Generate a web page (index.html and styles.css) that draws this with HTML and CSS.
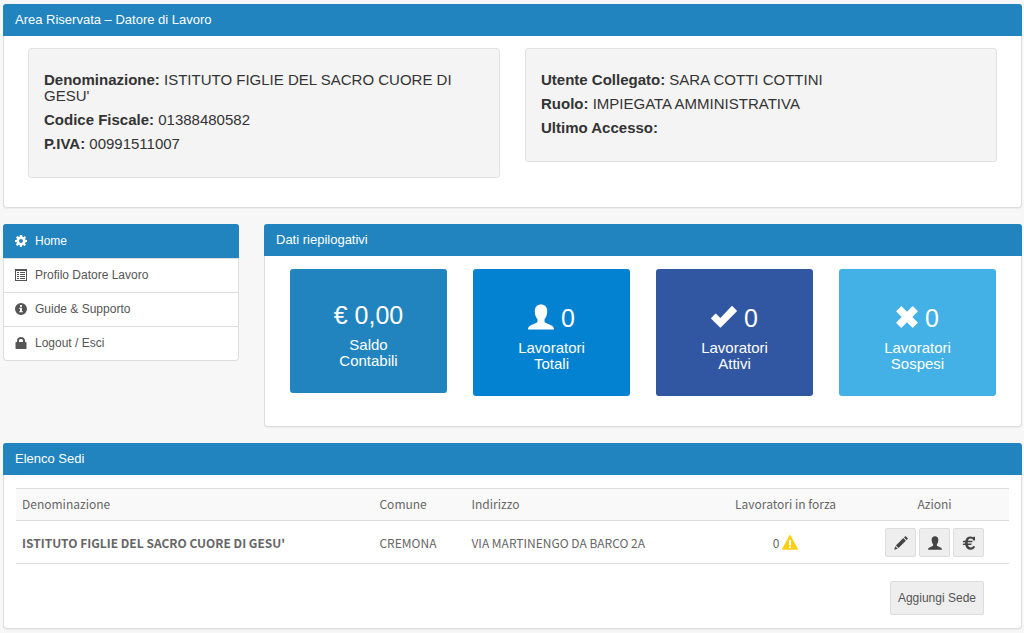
FILE: index.html
```html
<!DOCTYPE html>
<html lang="it">
<head>
<meta charset="utf-8">
<meta name="viewport" content="width=device-width, initial-scale=1">
<title>Area Riservata – Datore di Lavoro</title>
<link rel="stylesheet" href="styles.css">
</head>
<body>
<svg class="sprite" aria-hidden="true">
  <symbol id="i-user" viewBox="0 0 26 26"><path d="M13 .5c3.900 0 6.200 2.400 6.200 6.500 0 3.800-1.100 6.700-2.700 8.300v2c0 .8.3 1.200 1 1.500l5.600 2.500c1.600.7 2.900 2 2.900 4.200H0c0-2.200 1.300-3.500 2.900-4.200l5.600-2.500c.7-.3 1-.7 1-1.500v-2C7.900 13.700 6.800 10.800 6.800 7 6.800 2.900 9.100.5 13 .5z"/></symbol>
  <symbol id="i-check" viewBox="0 0 26 22"><path d="M21.600.3l4.100 4.200c.3.300.3.700 0 1L10 21.300c-.4.400-.8.400-1.200 0L.4 13c-.4-.4-.4-.8 0-1.200l3.700-3.700c.4-.4.8-.4 1.200 0l4.100 4L20.500.3c.4-.4.7-.4 1.100 0z"/></symbol>
  <symbol id="i-cross" viewBox="0 0 22 22"><path d="M5.800.5L11 5.700 16.200.5c.3-.3.700-.3 1 0l4.300 4.300c.3.300.3.700 0 1L16.300 11l5.200 5.200c.3.300.3.700 0 1l-4.300 4.300c-.3.300-.7.300-1 0L11 16.300l-5.200 5.200c-.3.300-.7.300-1 0L.5 17.200c-.3-.3-.3-.7 0-1L5.700 11 .5 5.800c-.3-.3-.3-.7 0-1L4.800.5c.3-.3.700-.3 1 0z"/></symbol>
  <symbol id="i-cog" viewBox="0 0 24 24"><path fill-rule="evenodd" d="M9.700 0h4.600l.7 3.800 1.500.6L19.700 2.200 22 5.300l-2.300 3 .7 1.400 3.600.5v3.900l-3.700.7-.6 1.500 2.200 3.100-2.800 2.800-3.100-2.200-1.600.7-.7 3.300H10l-.7-3.600-1.500-.7-3.100 2.200-2.900-2.800 2.200-3.200-.6-1.500L0 13.900V10l3.600-.7.600-1.500L2.100 4.800 4.900 2l3.200 2.200 1-.4zM12 8a4 4 0 1 0 0 8 4 4 0 0 0 0-8z"/></symbol>
  <symbol id="i-list" viewBox="0 0 12 12"><path fill-rule="evenodd" d="M0 0h12v12H0zM1 2v9h10V2zM2 3h2v1H2zM5 3h5v1H5zM2 5h2v1H2zM5 5h5v1H5zM2 7h2v1H2zM5 7h5v1H5zM2 9h2v1H2zM5 9h5v1H5z"/></symbol>
  <symbol id="i-info" viewBox="0 0 12 12"><path fill-rule="evenodd" d="M6 0a6 6 0 1 1 0 12A6 6 0 0 1 6 0zM5 2v1.700h2V2zM4.200 4.700v1H5v2.600h-.8v1h3.600v-1H7V4.700z"/></symbol>
  <symbol id="i-lock" viewBox="0 0 12 12"><path fill-rule="evenodd" d="M2 5V3.700C2 1.500 3.700 0 6 0s4 1.500 4 3.700V5h.8c.5 0 .7.300.7.700v5.600c0 .4-.3.700-.7.700H1.200c-.4 0-.7-.3-.7-.7V5.700c0-.4.3-.7.700-.7zM4 5h4V3.700C8 2.600 7.200 2 6 2s-2 .6-2 1.700z"/></symbol>
  <symbol id="i-pencil" viewBox="0 0 14 14"><path d="M11 .4c.3-.3.700-.3 1 0l1.600 1.600c.3.300.3.700 0 1l-1 1L10 1.400zM9.300 2.100l2.600 2.600-7.400 7.400-2.600-2.600zM1.200 10.200l2.600 2.600L.2 13.800z"/></symbol>
  <symbol id="i-euro" viewBox="0 0 14 14"><path d="M13 1.300v3.200h-1.600c-.4-1.300-1.300-2-2.600-2-1.500 0-2.400.8-2.800 2.200h4.700l-.5 1.500H5.700v1.300h4l-.5 1.500H6c.4 1.600 1.400 2.500 2.900 2.500 1.200 0 2.100-.6 2.700-1.700l1.500.9c-.9 1.900-2.400 3-4.500 3-2.900 0-4.800-1.600-5.300-4.700H.7L1.200 7.500h1.900V6.200H.7l.5-1.500h2.200C3.900 1.900 5.800.4 8.400.4c1.200 0 2.100.4 2.900 1.100l.2-.7H13z"/></symbol>
  <symbol id="i-warn" viewBox="0 0 16 15"><path fill-rule="evenodd" d="M7.300.5c.3-.6 1.100-.6 1.400 0l7.100 13.200c.3.600 0 1.100-.6 1.100H.8c-.6 0-.9-.5-.6-1.100zM7 5v5.300h2V5zM7 11.200v1.900h2v-1.900z"/></symbol>
</svg>

<main class="page">
  <section class="panel">
    <h2 class="panel-title">Area Riservata – Datore di Lavoro</h2>
    <div class="wells">
      <div class="well">
        <p><strong>Denominazione:</strong> ISTITUTO FIGLIE DEL SACRO CUORE DI GESU'</p>
        <p><strong>Codice Fiscale:</strong> 01388480582</p>
        <p><strong>P.IVA:</strong> 00991511007</p>
      </div>
      <div class="well">
        <p><strong>Utente Collegato:</strong> SARA COTTI COTTINI</p>
        <p><strong>Ruolo:</strong> IMPIEGATA AMMINISTRATIVA</p>
        <p><strong>Ultimo Accesso:</strong></p>
      </div>
    </div>
  </section>

  <div class="middle">
    <nav class="menu">
      <a class="menu-item active" href="#home"><svg><use href="#i-cog"/></svg>Home</a>
      <a class="menu-item" href="#profilo"><svg><use href="#i-list"/></svg>Profilo Datore Lavoro</a>
      <a class="menu-item" href="#guide"><svg><use href="#i-info"/></svg>Guide &amp; Supporto</a>
      <a class="menu-item" href="#logout"><svg><use href="#i-lock"/></svg>Logout / Esci</a>
    </nav>
    <section class="panel">
      <h2 class="panel-title">Dati riepilogativi</h2>
      <div class="tiles">
        <div class="tile balance">
          <div class="figure">€ 0,00</div>
          <div class="caption">Saldo<br>Contabili</div>
        </div>
        <div class="tile total">
          <div class="figure with-icon"><svg class="user"><use href="#i-user"/></svg>0</div>
          <div class="caption">Lavoratori<br>Totali</div>
        </div>
        <div class="tile enabled">
          <div class="figure with-icon"><svg class="check"><use href="#i-check"/></svg>0</div>
          <div class="caption">Lavoratori<br>Attivi</div>
        </div>
        <div class="tile suspended">
          <div class="figure with-icon"><svg class="cross"><use href="#i-cross"/></svg>0</div>
          <div class="caption">Lavoratori<br>Sospesi</div>
        </div>
      </div>
    </section>
  </div>

  <section class="panel">
    <h2 class="panel-title">Elenco Sedi</h2>
    <div class="sites">
      <table class="sites-table">
        <thead>
          <tr>
            <th class="col-name">Denominazione</th>
            <th class="col-town">Comune</th>
            <th class="col-address">Indirizzo</th>
            <th class="col-staff">Lavoratori in forza</th>
            <th class="col-actions">Azioni</th>
          </tr>
        </thead>
        <tbody>
          <tr>
            <td class="name">ISTITUTO FIGLIE DEL SACRO CUORE DI GESU'</td>
            <td>CREMONA</td>
            <td>VIA MARTINENGO DA BARCO 2A</td>
            <td><div class="staff">0<svg><use href="#i-warn"/></svg></div></td>
            <td>
              <div class="actions">
                <button type="button" class="btn icon-btn" aria-label="Modifica"><svg><use href="#i-pencil"/></svg></button>
                <button type="button" class="btn icon-btn" aria-label="Lavoratori"><svg><use href="#i-user"/></svg></button>
                <button type="button" class="btn icon-btn" aria-label="Contabilità"><svg><use href="#i-euro"/></svg></button>
              </div>
            </td>
          </tr>
        </tbody>
      </table>
      <div class="footer">
        <button type="button" class="btn add-btn">Aggiungi Sede</button>
      </div>
    </div>
  </section>
</main>
</body>
</html>
```
FILE: styles.css
```css
* {
  box-sizing: border-box;
}

body {
  margin: 0;
  background: #f7f7f7;
  color: #333;
  font-family: "Liberation Sans", Arial, sans-serif;
  font-size: 15px;
  line-height: 16px;
}

svg {
  fill: currentColor;
  flex: none;
}

.sprite {
  display: none;
}

.page {
  display: flex;
  flex-direction: column;
  gap: 16px;
  padding: 4px 2px 4px 3px;
}

.panel {
  background: #fff;
  border: 1px solid #ddd;
  border-top: 0;
  border-radius: 4px;
  box-shadow: 0 1px 1px rgba(0, 0, 0, 0.05);
}

.panel-title {
  margin: 0 -1px;
  padding: 8px 12px;
  background: #2184be;
  border-radius: 3px 3px 0 0;
  color: #fff;
  font-size: 13px;
  font-weight: 400;
  line-height: 16px;
}

/* Company and user details */
.wells {
  display: grid;
  grid-template-columns: 1fr 1fr;
  align-items: start;
  gap: 25px;
  padding: 12px 24px 29px;
}

.well {
  padding: 23px 15px 25px;
  background: #f4f4f4;
  border: 1px solid #e2e2e2;
  border-radius: 3px;
}

.well p {
  margin: 0;
}

.well p + p {
  margin-top: 8px;
}

/* Menu and summary */
.middle {
  display: grid;
  grid-template-columns: 236px 1fr;
  align-items: start;
  gap: 25px;
}

.menu {
  background: #fff;
  border: 1px solid #ddd;
  border-top: 0;
  border-radius: 4px;
}

.menu-item {
  display: flex;
  align-items: center;
  gap: 8px;
  padding: 8px 11px 9px;
  border-top: 1px solid #ddd;
  color: #555;
  font-size: 12px;
  text-decoration: none;
}

.menu-item svg {
  width: 12px;
  height: 12px;
}

.menu-item.active {
  margin: 0 -1px;
  padding: 8px 12px 9px;
  background: #2184be;
  border-color: #2184be;
  border-radius: 3px 3px 0 0;
  color: #fff;
}

.tiles {
  display: grid;
  grid-template-columns: repeat(4, 1fr);
  align-items: start;
  gap: 26px;
  padding: 13px 25px 30px;
}

.tile {
  padding: 32px 8px 24px;
  border-radius: 3px;
  color: #fff;
  text-align: center;
}

.balance { background: #2184be; }
.total { background: #0482d2; }
.enabled { background: #3157a2; }
.suspended { background: #43b1e5; }

.figure {
  margin-bottom: 8px;
  font-size: 25px;
  line-height: 28px;
}

.figure.with-icon {
  display: flex;
  align-items: center;
  justify-content: center;
  gap: 7px;
  margin-bottom: 5px;
  line-height: 34px;
}

.with-icon svg { margin-bottom: 3px; }
.user { width: 26px; height: 26px; }
.check { width: 26px; height: 22px; }
.cross { width: 22px; height: 22px; }

/* Sites */
.sites {
  padding: 13px 12px;
}

.sites-table {
  width: 100%;
  border-collapse: collapse;
  table-layout: fixed;
  color: #666;
  font-family: "Noto Sans CJK SC", sans-serif;
  font-size: 12px;
}

.sites-table th {
  padding: 7px 6px 8px;
  background: #f9f9f9;
  border-top: 1px solid #ddd;
  border-bottom: 1px solid #ddd;
  font-weight: 400;
  text-align: left;
}

.sites-table td {
  padding: 7px 6px 6px;
  border-bottom: 1px solid #ddd;
  white-space: nowrap;
}

.col-name { width: 36%; }
.col-town { width: 92px; }
.col-staff { width: 15%; }
.col-actions { width: 15%; }

.sites-table .col-staff,
.sites-table .col-actions {
  text-align: center;
}

.name {
  font-weight: 700;
}

.staff,
.actions {
  display: flex;
  align-items: center;
  justify-content: center;
  gap: 3px;
}

.staff svg {
  width: 16px;
  height: 15px;
  fill: #fdd017;
}

.btn {
  display: flex;
  align-items: center;
  justify-content: center;
  border: 1px solid #ddd;
  border-radius: 2px;
  background: #eee;
  color: #444;
  font-family: inherit;
  font-size: 12px;
}

.icon-btn {
  width: 31px;
  height: 29px;
  padding: 0;
}

.icon-btn svg {
  width: 14px;
  height: 14px;
}

.footer {
  display: flex;
  justify-content: flex-end;
  padding: 17px 25px 0;
}

.add-btn {
  padding: 8px 7px;
  color: #555;
  line-height: 16px;
}
```
